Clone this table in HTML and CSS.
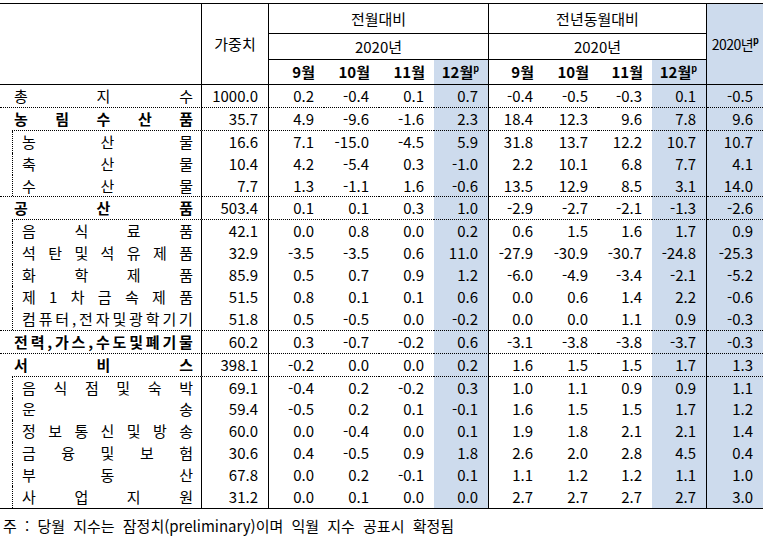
FILE: index.html
```html
<!DOCTYPE html>
<html lang="ko">
<head>
<meta charset="utf-8">
<title>생산자물가지수</title>
<link rel="stylesheet" href="styles.css">
</head>
<body>
<table class="tbl">
<colgroup>
<col class="c-lab"><col class="c-w">
<col class="c-m"><col class="c-m"><col class="c-m"><col class="c-m">
<col class="c-y1"><col class="c-y2"><col class="c-y1"><col class="c-y2">
<col class="c-yr">
</colgroup>
<thead>
<tr class="h1">
<th rowspan="3" class="lab br"></th>
<th rowspan="3" class="br">가중치</th>
<th colspan="4" class="br bb">전월대비</th>
<th colspan="4" class="br bb">전년동월대비</th>
<th rowspan="3" class="s yr">2020년<sup class="p">p</sup></th>
</tr>
<tr class="h2">
<th colspan="4" class="br bb">2020년</th>
<th colspan="4" class="br bb">2020년</th>
</tr>
<tr class="h3">
<th class="m">9월</th><th class="m">10월</th><th class="m">11월</th><th class="m s br">12월<sup class="p">p</sup></th>
<th class="m">9월</th><th class="m">10월</th><th class="m">11월</th><th class="m s br">12월<sup class="p">p</sup></th>
</tr>
</thead>
<tbody>
<tr class="grp"><td class="lab br"><div class="j"><span>총</span><span>지</span><span>수</span></div></td><td class="br">1000.0</td><td>0.2</td><td>-0.4</td><td>0.1</td><td class="s br">0.7</td><td>-0.4</td><td>-0.5</td><td>-0.3</td><td class="s br">0.1</td><td class="s">-0.5</td></tr>
<tr class="grp dt"><td class="lab br"><div class="j b"><span>농</span><span>림</span><span>수</span><span>산</span><span>품</span></div></td><td class="br">35.7</td><td>4.9</td><td>-9.6</td><td>-1.6</td><td class="s br">2.3</td><td>18.4</td><td>12.3</td><td>9.6</td><td class="s br">7.8</td><td class="s">9.6</td></tr>
<tr class="sub first"><td class="lab br"><div class="j"><span>농</span><span>산</span><span>물</span></div></td><td class="br">16.6</td><td>7.1</td><td>-15.0</td><td>-4.5</td><td class="s br">5.9</td><td>31.8</td><td>13.7</td><td>12.2</td><td class="s br">10.7</td><td class="s">10.7</td></tr>
<tr class="sub"><td class="lab br"><div class="j"><span>축</span><span>산</span><span>물</span></div></td><td class="br">10.4</td><td>4.2</td><td>-5.4</td><td>0.3</td><td class="s br">-1.0</td><td>2.2</td><td>10.1</td><td>6.8</td><td class="s br">7.7</td><td class="s">4.1</td></tr>
<tr class="sub"><td class="lab br"><div class="j"><span>수</span><span>산</span><span>물</span></div></td><td class="br">7.7</td><td>1.3</td><td>-1.1</td><td>1.6</td><td class="s br">-0.6</td><td>13.5</td><td>12.9</td><td>8.5</td><td class="s br">3.1</td><td class="s">14.0</td></tr>
<tr class="grp dt"><td class="lab br"><div class="j b"><span>공</span><span>산</span><span>품</span></div></td><td class="br">503.4</td><td>0.1</td><td>0.1</td><td>0.3</td><td class="s br">1.0</td><td>-2.9</td><td>-2.7</td><td>-2.1</td><td class="s br">-1.3</td><td class="s">-2.6</td></tr>
<tr class="sub first"><td class="lab br"><div class="j"><span>음</span><span>식</span><span>료</span><span>품</span></div></td><td class="br">42.1</td><td>0.0</td><td>0.8</td><td>0.0</td><td class="s br">0.2</td><td>0.6</td><td>1.5</td><td>1.6</td><td class="s br">1.7</td><td class="s">0.9</td></tr>
<tr class="sub"><td class="lab br"><div class="j"><span>석</span><span>탄</span><span>및</span><span>석</span><span>유</span><span>제</span><span>품</span></div></td><td class="br">32.9</td><td>-3.5</td><td>-3.5</td><td>0.6</td><td class="s br">11.0</td><td>-27.9</td><td>-30.9</td><td>-30.7</td><td class="s br">-24.8</td><td class="s">-25.3</td></tr>
<tr class="sub"><td class="lab br"><div class="j"><span>화</span><span>학</span><span>제</span><span>품</span></div></td><td class="br">85.9</td><td>0.5</td><td>0.7</td><td>0.9</td><td class="s br">1.2</td><td>-6.0</td><td>-4.9</td><td>-3.4</td><td class="s br">-2.1</td><td class="s">-5.2</td></tr>
<tr class="sub"><td class="lab br"><div class="j"><span>제</span><span>1</span><span>차</span><span>금</span><span>속</span><span>제</span><span>품</span></div></td><td class="br">51.5</td><td>0.8</td><td>0.1</td><td>0.1</td><td class="s br">0.6</td><td>0.0</td><td>0.6</td><td>1.4</td><td class="s br">2.2</td><td class="s">-0.6</td></tr>
<tr class="sub"><td class="lab br"><div class="j"><span>컴</span><span>퓨</span><span>터</span><span>,</span><span>전</span><span>자</span><span>및</span><span>광</span><span>학</span><span>기</span><span>기</span></div></td><td class="br">51.8</td><td>0.5</td><td>-0.5</td><td>0.0</td><td class="s br">-0.2</td><td>0.0</td><td>0.0</td><td>1.1</td><td class="s br">0.9</td><td class="s">-0.3</td></tr>
<tr class="grp dt"><td class="lab br"><div class="j b"><span>전</span><span>력</span><span>,</span><span>가</span><span>스</span><span>,</span><span>수</span><span>도</span><span>및</span><span>폐</span><span>기</span><span>물</span></div></td><td class="br">60.2</td><td>0.3</td><td>-0.7</td><td>-0.2</td><td class="s br">0.6</td><td>-3.1</td><td>-3.8</td><td>-3.8</td><td class="s br">-3.7</td><td class="s">-0.3</td></tr>
<tr class="grp dt"><td class="lab br"><div class="j b"><span>서</span><span>비</span><span>스</span></div></td><td class="br">398.1</td><td>-0.2</td><td>0.0</td><td>0.0</td><td class="s br">0.2</td><td>1.6</td><td>1.5</td><td>1.5</td><td class="s br">1.7</td><td class="s">1.3</td></tr>
<tr class="sub first"><td class="lab br"><div class="j"><span>음</span><span>식</span><span>점</span><span>및</span><span>숙</span><span>박</span></div></td><td class="br">69.1</td><td>-0.4</td><td>0.2</td><td>-0.2</td><td class="s br">0.3</td><td>1.0</td><td>1.1</td><td>0.9</td><td class="s br">0.9</td><td class="s">1.1</td></tr>
<tr class="sub"><td class="lab br"><div class="j"><span>운</span><span>송</span></div></td><td class="br">59.4</td><td>-0.5</td><td>0.2</td><td>0.1</td><td class="s br">-0.1</td><td>1.6</td><td>1.5</td><td>1.5</td><td class="s br">1.7</td><td class="s">1.2</td></tr>
<tr class="sub"><td class="lab br"><div class="j"><span>정</span><span>보</span><span>통</span><span>신</span><span>및</span><span>방</span><span>송</span></div></td><td class="br">60.0</td><td>0.0</td><td>-0.4</td><td>0.0</td><td class="s br">0.1</td><td>1.9</td><td>1.8</td><td>2.1</td><td class="s br">2.1</td><td class="s">1.4</td></tr>
<tr class="sub"><td class="lab br"><div class="j"><span>금</span><span>융</span><span>및</span><span>보</span><span>험</span></div></td><td class="br">30.6</td><td>0.4</td><td>-0.5</td><td>0.9</td><td class="s br">1.8</td><td>2.6</td><td>2.0</td><td>2.8</td><td class="s br">4.5</td><td class="s">0.4</td></tr>
<tr class="sub"><td class="lab br"><div class="j"><span>부</span><span>동</span><span>산</span></div></td><td class="br">67.8</td><td>0.0</td><td>0.2</td><td>-0.1</td><td class="s br">0.1</td><td>1.1</td><td>1.2</td><td>1.2</td><td class="s br">1.1</td><td class="s">1.0</td></tr>
<tr class="sub last"><td class="lab br"><div class="j"><span>사</span><span>업</span><span>지</span><span>원</span></div></td><td class="br">31.2</td><td>0.0</td><td>0.1</td><td>0.0</td><td class="s br">0.0</td><td>2.7</td><td>2.7</td><td>2.7</td><td class="s br">2.7</td><td class="s">3.0</td></tr>
</tbody>
</table>
<p class="note">주 : 당월 지수는 잠정치(preliminary)이며 익월 지수 공표시 확정됨</p>
</body>
</html>
```
FILE: styles.css
```css
html, body {
  margin: 0;
  padding: 0;
  background: #fff;
}
body {
  padding-top: 3px;
  font-family: "Noto Sans CJK KR", "Noto Sans", sans-serif;
  font-size: 15px;
  color: #000;
}
.tbl {
  width: 762px;
  table-layout: fixed;
  border-collapse: separate;
  border-spacing: 0;
}
.c-lab { width: 202px; }
.c-w { width: 67px; }
.c-m { width: 55px; }
.c-y1 { width: 54px; }
.c-y2 { width: 55px; }
.c-yr { width: 56px; }

.tbl th, .tbl td {
  padding: 0;
  line-height: 20px;
}
.tbl th {
  font-weight: normal;
  text-align: center;
  vertical-align: middle;
}
.h1 th { border-top: 1px solid #000; height: 29px; }
.h2 th { height: 25px; }
.h3 th { height: 24px; border-bottom: 1px solid #000; }
.h1 th[rowspan] { border-bottom: 1px solid #000; }
.bb { border-bottom: 1px solid #000; }
.br { border-right: 1px solid #000; }
.tbl th.m {
  text-align: right;
  padding-right: 9px;
  font-weight: bold;
}
.tbl th.yr { font-size: 14px; letter-spacing: -0.5px; }
.p {
  font-size: 9px;
  vertical-align: 6px;
  line-height: 0;
  font-weight: bold;
}
.s { background: #cddbed; }

.tbl td {
  height: 21.9px;
  text-align: right;
  padding-right: 10px;
  vertical-align: middle;
}
.tbl td.lab {
  position: relative;
  text-align: left;
  padding: 0 8px 0 14px;
}
.j {
  display: flex;
  justify-content: space-between;
  white-space: nowrap;
}
.b { font-weight: bold; }
.sub td.lab { padding-left: 22px; }
.sub td.lab::after {
  content: "";
  position: absolute;
  left: 12px;
  top: 0;
  bottom: 0;
  border-left: 1px dotted #000;
}
.dt td { border-top: 1px dotted #000; }
.first td { border-top: 1px dotted #000; }
.first td.lab { border-top: 1px solid transparent; }
.first td.lab::before {
  content: "";
  position: absolute;
  left: 12px;
  right: 0;
  top: -1px;
  border-top: 1px dotted #000;
}
.last td { border-bottom: 1px solid #000; }

.note {
  margin: 7px 0 0 3px;
  font-size: 15px;
  line-height: 20px;
  word-spacing: 4px;
}
```
